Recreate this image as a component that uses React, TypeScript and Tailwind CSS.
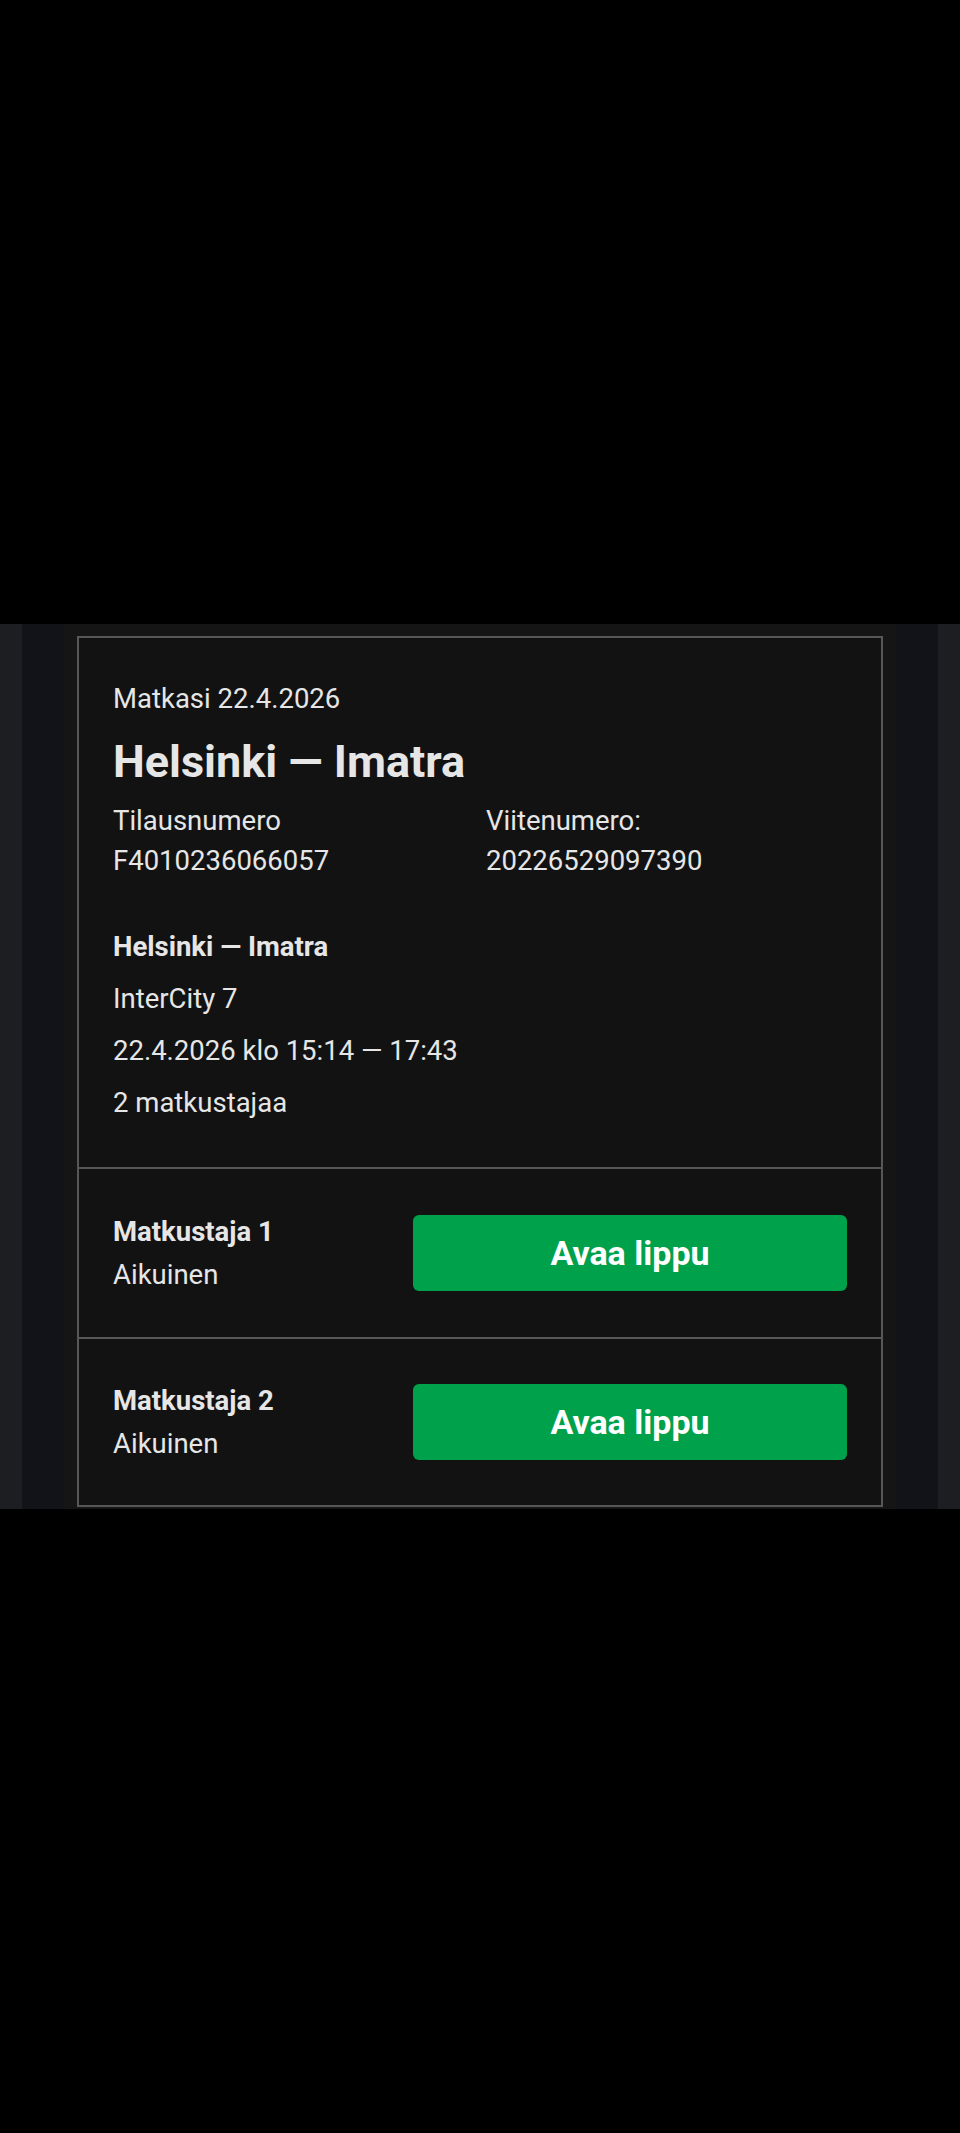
export default function App() {
    const passengers = [
        { name: "Matkustaja 1", type: "Aikuinen", pad: "py-[41px]" },
        { name: "Matkustaja 2", type: "Aikuinen", pad: "py-[40px]" },
    ]

    return (
        <div
            className="min-h-[2133px] bg-black pt-[624px] text-[#e6e6e6]"
            style={{ fontFamily: "Roboto, 'Noto Sans', sans-serif" }}
        >
            <div className="bg-[#121318] border-x-[22px] border-[#1d1e22] px-[42px]">
                <div className="bg-[#151515] px-[13px] pt-[12px] pb-[2px]">
                    <div className="border-2 border-[#575757] bg-[#121212]">
                        <div className="px-[34px] pt-[41px] pb-[44px]">
                            <p className="text-[27.5px] leading-[40px]">Matkasi 22.4.2026</p>
                            <h1 className="mt-[17px] text-[45px] leading-[52px] font-bold">
                                Helsinki — Imatra
                            </h1>
                            <div className="mt-[13px] grid grid-cols-[373px_1fr] text-[27.5px] leading-[40px]">
                                <div>
                                    <p>Tilausnumero</p>
                                    <p>F4010236066057</p>
                                </div>
                                <div>
                                    <p>Viitenumero:</p>
                                    <p>20226529097390</p>
                                </div>
                            </div>

                            <div className="mt-[46px] text-[27.5px] leading-[40px] space-y-3">
                                <p className="font-bold">Helsinki — Imatra</p>
                                <p>InterCity 7</p>
                                <p>22.4.2026 klo 15:14 — 17:43</p>
                                <p>2 matkustajaa</p>
                            </div>
                        </div>

                        {passengers.map((p) => (
                            <div
                                key={p.name}
                                className={`border-t-2 border-[#575757] px-[34px] ${p.pad} grid grid-cols-[300px_1fr] items-center`}
                            >
                                <div className="text-[27.5px] leading-[43px]">
                                    <p className="font-bold">{p.name}</p>
                                    <p>{p.type}</p>
                                </div>
                                <button className="h-[76px] w-full rounded-[6px] bg-[#00a14b] text-white text-[34px] font-bold">
                                    Avaa lippu
                                </button>
                            </div>
                        ))}
                    </div>
                </div>
            </div>
        </div>
    )
}
